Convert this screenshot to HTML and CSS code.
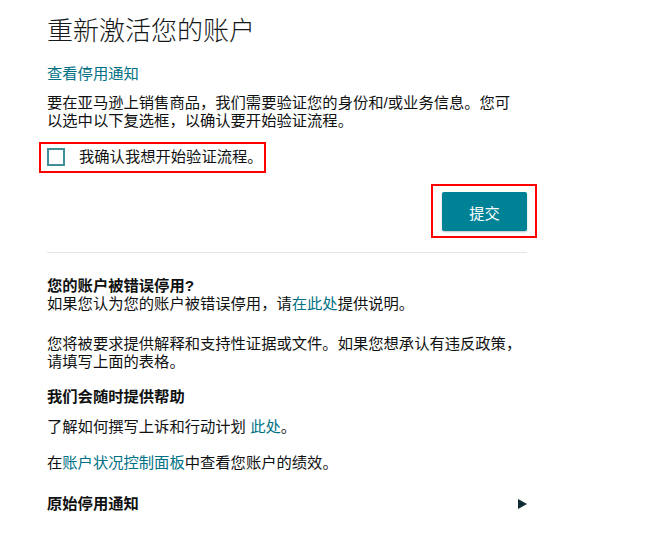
FILE: index.html
```html
<!DOCTYPE html>
<html lang="zh-CN">
<head>
    <meta charset="UTF-8">
    <meta name="viewport" content="width=device-width, initial-scale=1.0">
    <title>重新激活您的账户</title>
    <link rel="stylesheet" href="styles.css">
</head>
<body>
    <div class="page">
        <h1>重新激活您的账户</h1>
        <a class="link notice-link" href="#">查看停用通知</a>
        <p class="intro">要在亚马逊上销售商品，我们需要验证您的身份和/或业务信息。您可以选中以下复选框，以确认要开始验证流程。</p>

        <label class="confirm">
            <span class="box"></span>
            <span>我确认我想开始验证流程。</span>
        </label>

        <div class="actions">
            <div class="mark">
                <button class="submit" type="button">提交</button>
            </div>
        </div>

        <hr class="divider">

        <h3 class="sub">您的账户被错误停用?</h3>
        <p class="tight">如果您认为您的账户被错误停用，请<a class="link" href="#">在此处</a>提供说明。</p>
        <p class="para2">您将被要求提供解释和支持性证据或文件。如果您想承认有违反政策，请填写上面的表格。</p>

        <h3 class="sub help">我们会随时提供帮助</h3>
        <p class="learn">了解如何撰写上诉和行动计划 <a class="link" href="#">此处</a>。</p>
        <p class="health">在<a class="link" href="#">账户状况控制面板</a>中查看您账户的绩效。</p>

        <div class="original">
            <span>原始停用通知</span>
            <span class="arrow"></span>
        </div>
    </div>
</body>
</html>
```

FILE: styles.css
```css
body {
    margin: 0;
    background-color: #ffffff;
    color: #0f1111;
    font-family: "Liberation Sans", "Noto Sans CJK SC", sans-serif;
    font-size: 15.3px;
    line-height: 18px;
}

.page {
    width: 480px;
    padding: 15px 0 0 47px;
}

h1 {
    margin: 0 0 18px;
    font-size: 26px;
    line-height: 32px;
    font-weight: 300;
    color: #16191a;
}

.link {
    color: #007185;
    text-decoration: none;
}

.notice-link {
    display: block;
}

p {
    margin: 0;
    max-width: 476px;
}

.intro {
    margin-top: 11px;
}

/* checkbox row (red box is the annotation) */
.confirm {
    display: flex;
    align-items: center;
    gap: 14px;
    width: fit-content;
    margin: 12px 0 0 -8px;
    padding: 4px 1px 5px 6px;
    border: 2px solid #ff0000;
    cursor: pointer;
}

.box {
    width: 14px;
    height: 14px;
    border: 2px solid #3f8f9b;
    background-color: #ffffff;
}

.actions {
    display: flex;
    justify-content: flex-end;
    margin-top: 11px;
}

.mark {
    margin-right: -10px;
    padding: 6px 8px 5px 9px;
    border: 2px solid #ff0000;
}

.submit {
    display: block;
    width: 85px;
    height: 39px;
    border: none;
    border-radius: 2px;
    background-color: #008296;
    color: #ffffff;
    font-family: inherit;
    font-size: 15.3px;
    box-shadow: 0 1px 2px rgba(0, 0, 0, 0.25);
    cursor: pointer;
}

.divider {
    margin: 14px 0 0;
    border: none;
    border-top: 1px solid #e3e6e6;
}

.sub {
    margin: 24px 0 0;
    font-size: 15.3px;
    line-height: 18px;
    font-weight: bold;
}

.para2 {
    margin-top: 22px;
}

.help {
    margin-top: 17px;
}

.learn {
    margin-top: 12px;
}

.health {
    margin-top: 18px;
}

.original {
    display: flex;
    justify-content: space-between;
    align-items: center;
    margin-top: 23px;
    font-weight: bold;
}

.arrow {
    width: 0;
    height: 0;
    border-left: 9px solid #0d2b30;
    border-top: 5px solid transparent;
    border-bottom: 5px solid transparent;
}
```
